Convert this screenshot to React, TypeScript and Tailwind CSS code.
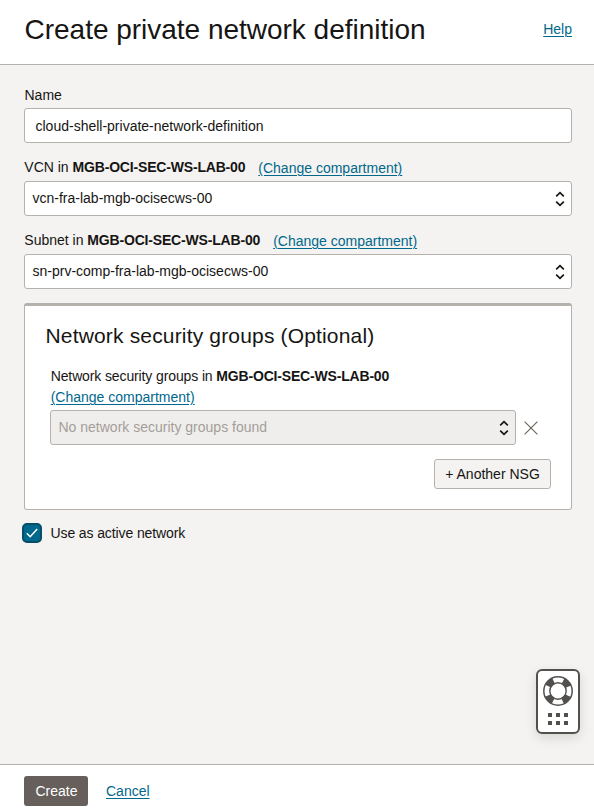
import React from "react";

const FONT = "font-['Liberation_Sans',Arial,sans-serif]";

function Link({ children, className = "" }: { children: React.ReactNode; className?: string }) {
  return (
    <a href="#" className={`text-[#00688c] underline decoration-1 underline-offset-2 whitespace-nowrap ${className}`}>
      {children}
    </a>
  );
}

function Chevrons() {
  return (
    <svg width="10" height="16" viewBox="0 0 10 16" fill="none" stroke="#161513" strokeWidth="1.7" className="shrink-0">
      <path d="M1.2 5.3 5 1.6l3.8 3.7M1.2 10.7 5 14.4l3.8-3.7" />
    </svg>
  );
}

function Select({ value, disabled = false }: { value: string; disabled?: boolean }) {
  return (
    <div
      className={`flex h-[35px] grow items-center justify-between rounded-[3px] border border-[#b5b1ad] pr-[6px] pl-[7.5px] ${
        disabled ? "bg-[#f0eeec] text-[#a39e99]" : "bg-white"
      }`}
    >
      <span className="pb-[2px]">{value}</span>
      <Chevrons />
    </div>
  );
}

function Compartment() {
  return <b className="tracking-[-0.18px]">MGB-OCI-SEC-WS-LAB-00</b>;
}

function CompartmentLabel({ text }: { text: string }) {
  return (
    <div className="ml-[0.3px] flex h-[18px] items-start gap-[13px] leading-[16px]">
      <span className="whitespace-nowrap">
        {text} in <Compartment />
      </span>
      <Link className="pt-px">(Change compartment)</Link>
    </div>
  );
}

function HelpWidget() {
  return (
    <div className="absolute top-[669px] left-[536px] flex h-[65px] w-[44px] flex-col items-center rounded-[6px] border-2 border-[#52504d] bg-white pt-[4px] shadow-[0_4px_12px_rgba(0,0,0,0.12)]">
      <svg width="32" height="32" viewBox="0 0 32 32" fill="none" stroke="#52504d" className="shrink-0">
        <circle cx="16" cy="16" r="11" strokeWidth="6.5" strokeDasharray="7.6 9.679" strokeDashoffset="-4.84" />
        <circle cx="16" cy="16" r="14.2" strokeWidth="1.5" />
        <circle cx="16" cy="16" r="8.2" strokeWidth="1.4" />
      </svg>
      <div className="mt-[6px] grid grid-cols-3 gap-[4px]">
        {[0, 1, 2, 3, 4, 5].map((i) => (
          <span key={i} className="size-[4px] bg-[#52504d]" />
        ))}
      </div>
    </div>
  );
}

export default function App() {
  return (
    <div className={`relative flex h-[808px] w-[594px] flex-col overflow-hidden bg-[#f4f3f1] text-[14px] leading-[16px] text-[#161513] ${FONT}`}>
      <header className="flex h-[65px] shrink-0 items-start justify-between border-b border-[#b5b1ad] bg-white pr-[22px] pl-[24.5px]">
        <h1 className="pt-[14px] text-[28px] leading-[32px] tracking-[-0.015px]">Create private network definition</h1>
        <Link className="pt-[21px]">Help</Link>
      </header>

      <main className="flex grow flex-col pr-[22px] pl-[24px]">
        <label className="mt-[22px] ml-[0.5px] h-[21px]">Name</label>
        <div className="flex h-[35px] shrink-0 items-center rounded-[3px] border border-[#b5b1ad] bg-white pl-[10.5px]">
          cloud-shell-private-network-definition
        </div>

        <div className="mt-[16px] flex flex-col">
          <CompartmentLabel text="VCN" />
          <div className="mt-[4px] flex">
            <Select value="vcn-fra-lab-mgb-ocisecws-00" />
          </div>
        </div>

        <div className="mt-[16px] flex flex-col">
          <CompartmentLabel text="Subnet" />
          <div className="mt-[4px] flex">
            <Select value="sn-prv-comp-fra-lab-mgb-ocisecws-00" />
          </div>
        </div>

        <section className="mt-[14px] flex h-[207px] shrink-0 flex-col rounded-[3px] border border-t-[3px] border-[#b5b1ad] bg-white pr-[20px] pl-[21px]">
          <h2 className="mt-[17px] -ml-[0.5px] text-[21px] leading-[26px] tracking-[0.165px]">Network security groups (Optional)</h2>
          <div className="mt-[19px] ml-[5px] flex flex-col">
            <span className="-ml-[0.3px]">
              <span className="tracking-[-0.12px]">Network security groups in </span>
              <Compartment />
            </span>
            <Link className="mt-[5px] -ml-[0.3px] h-[21px]">(Change compartment)</Link>
            <div className="-ml-px flex items-center gap-[8px] pr-[13px]">
              <Select value="No network security groups found" disabled />
              <svg width="14" height="14" viewBox="0 0 14 14" stroke="#65605b" strokeWidth="1.1" className="shrink-0">
                <path d="m.6.6 12.8 12.8M13.4.6.6 13.4" />
              </svg>
            </div>
          </div>
          <button className="mt-[14px] h-[30px] w-[117px] self-end rounded-[3px] border border-[#b5b1ad] bg-[#f4f3f1]">
            + Another NSG
          </button>
        </section>

        <div className="mt-[13px] -ml-[2px] flex items-center gap-[8.5px]">
          <span className="flex size-[20px] items-center justify-center rounded-[5px] border-2 border-[#044e68] bg-[#00688c]">
            <svg width="12" height="10" viewBox="0 0 12 10" fill="none" stroke="#fff" strokeWidth="1.5" className="shrink-0">
              <path d="m.8 5.2 3.4 3.5L11.2 1" />
            </svg>
          </span>
          <span className="tracking-[-0.11px]">Use as active network</span>
        </div>
      </main>

      <footer className="flex h-[44px] shrink-0 items-start border-t border-[#b5b1ad] bg-white pt-[11px] pl-[24px]">
        <button className="h-[30px] w-[64px] rounded-[3px] bg-[#665f5b] pl-px text-white">Create</button>
        <Link className="mt-[7px] ml-[18px]">Cancel</Link>
      </footer>

      <HelpWidget />
    </div>
  );
}
